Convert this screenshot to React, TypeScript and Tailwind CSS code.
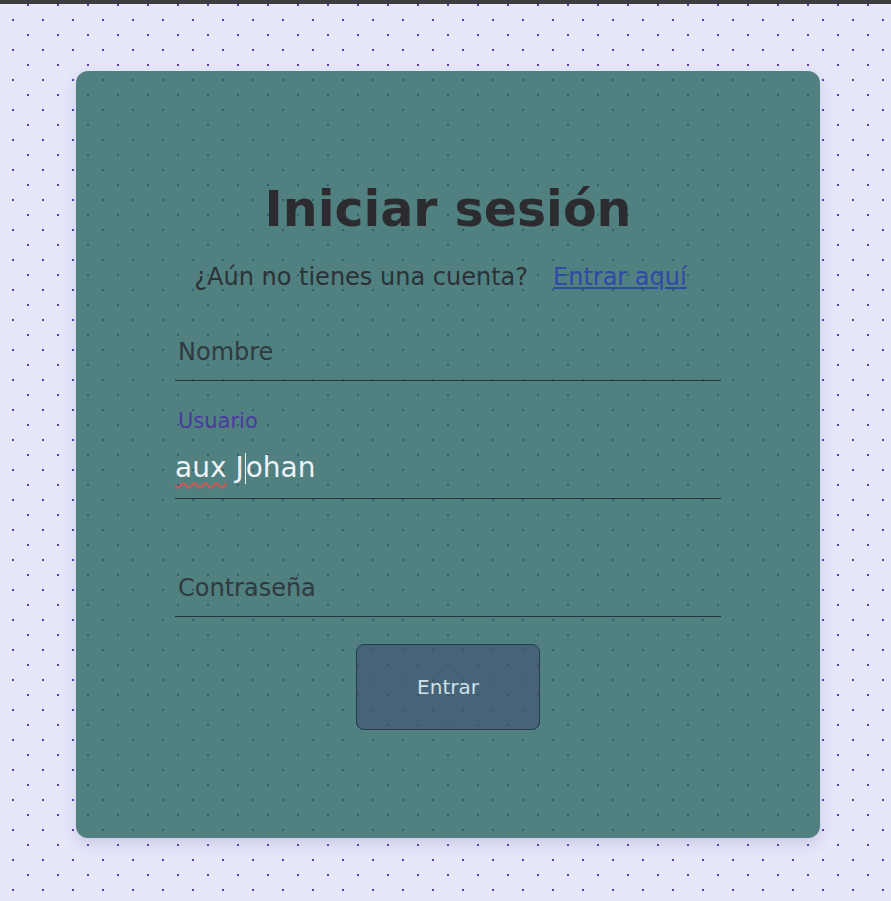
export default function App() {
  return (
    <div className="min-h-screen w-full border-t-4 border-[#3d3d40] bg-[#e6e6fa] bg-[image:radial-gradient(circle,#5544b8_1px,transparent_1.5px),radial-gradient(circle,#5544b8_1px,transparent_1.5px)] bg-[length:30px_30px] bg-[position:-2px_1px,13px_16px] pt-[67px] pb-[64px] font-['DejaVu_Sans',sans-serif]">
      <div className="ml-[76px] flex h-[767px] w-[744px] flex-col items-center rounded-xl bg-[rgba(44,102,98,0.8)] pt-[111px] shadow-[0_6px_14px_rgba(60,50,120,0.15)]">
        <h1 className="text-[49px] leading-[56px] font-bold text-[#2b2b30]">
          Iniciar sesión
        </h1>
        <p className="mt-[23px] pr-[15px] text-[24px] leading-[32px] text-[#2b3236]">
          ¿Aún no tienes una cuenta?
          <a href="#" className="ml-[25px] text-[#2d4aa6] underline underline-offset-2">
            Entrar aquí
          </a>
        </p>

        <div className="mt-[28px] w-[546px] border-b border-[#2a3438]">
          <input
            type="text"
            placeholder="Nombre"
            className="h-[59px] w-full bg-transparent pl-[3px] pt-[2px] text-[24px] text-[#e8eef5] outline-none placeholder:text-[#2f3a3f]"
          />
        </div>

        {/* campo activo con etiqueta flotante */}
        <div className="mt-[28px] w-[546px] border-b border-[#2a3438]">
          <label className="block pl-[3px] text-[21px] leading-[24px] text-[#4b3aa0]">
            Usuario
          </label>
          <div className="flex h-[65px] items-center pt-[5px] text-[28px] text-[#eef2f8]">
            <span className="underline decoration-wavy decoration-[#d9534f] decoration-[1.5px] underline-offset-[5px]">
              aux
            </span>
            <span className="whitespace-pre"> J</span>
            <span className="ml-[1px] h-[31px] w-px bg-[#eef2f8]" />
            <span>ohan</span>
          </div>
        </div>

        <div className="mt-[58px] w-[546px] border-b border-[#2a3438]">
          <input
            type="password"
            placeholder="Contraseña"
            className="h-[59px] w-full bg-transparent pl-[3px] pt-[2px] text-[24px] text-[#e8eef5] outline-none placeholder:text-[#2f3a3f]"
          />
        </div>

        <button className="mt-[27px] h-[86px] w-[184px] rounded-lg border border-[#2b3a4a] bg-[rgba(60,70,110,0.5)] text-[20px] text-[#cfe0ea]">
          Entrar
        </button>
      </div>
    </div>
  );
}
